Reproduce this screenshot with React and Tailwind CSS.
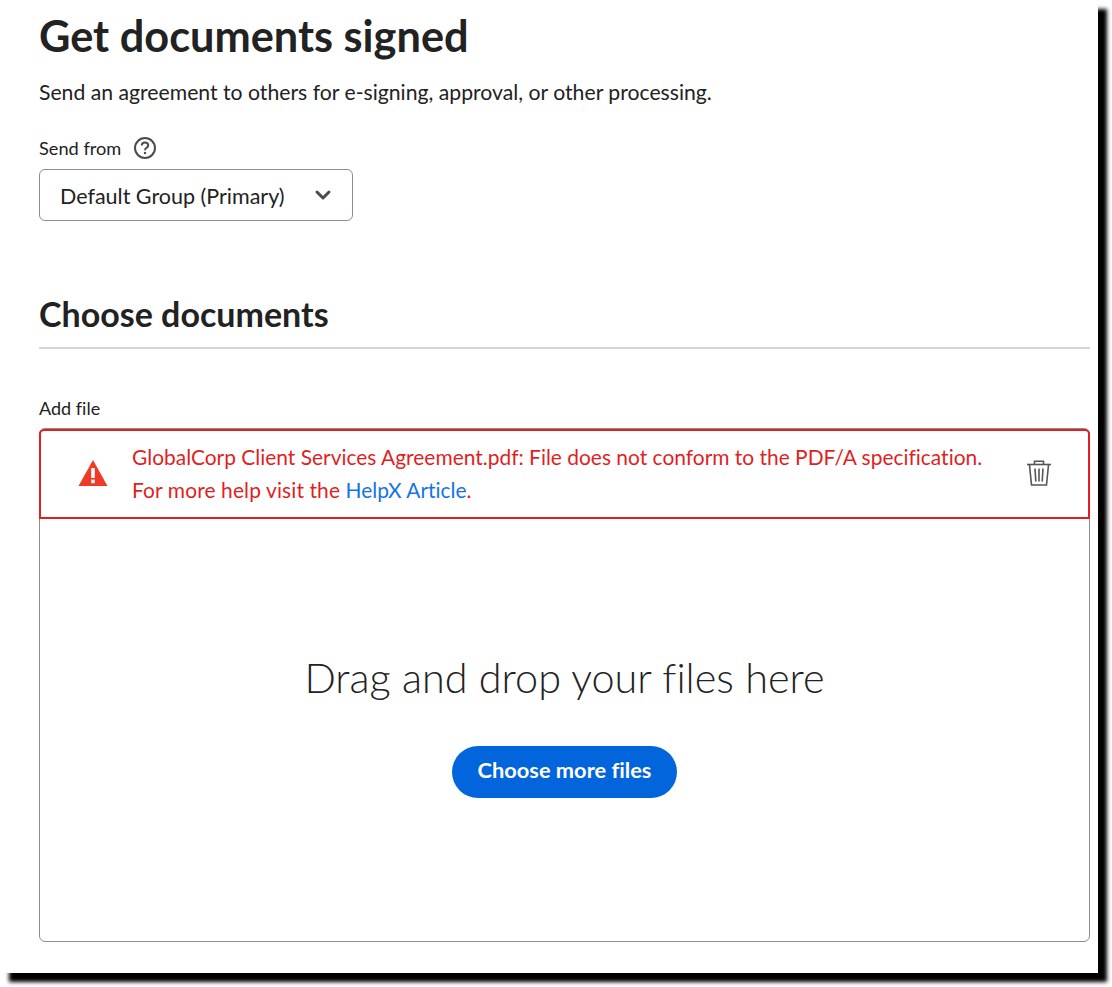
import React from 'react';
import { ChevronDown } from 'lucide-react';

const sans = "font-['Lato','Noto_Sans',sans-serif]";

const HelpIcon = () => (
  <svg width="24" height="24" viewBox="0 0 24 24" fill="none" stroke="#4b4b4b" strokeWidth="2">
    <circle cx="12" cy="12" r="10" />
    <path d="M8.8 9.6c0-1.9 1.4-3 3.2-3s3.2 1.1 3.2 2.8c0 2.4-3.2 2.4-3.2 4.8" />
    <circle cx="12" cy="17" r="1.2" fill="#4b4b4b" stroke="none" />
  </svg>
);

const AlertIcon = () => (
  <svg width="30" height="28" viewBox="0 0 30 28">
    <path d="M15 1 L29.5 27 H0.5 Z" fill="#ef3a26" />
    <rect x="13.2" y="9" width="3.6" height="10" fill="#fff" />
    <rect x="13.2" y="20.6" width="3.6" height="3.6" fill="#fff" />
  </svg>
);

const TrashIcon = () => (
  <svg width="26" height="28" viewBox="0 0 26 28" fill="none" stroke="#555" strokeWidth="1.6">
    <path d="M1 5.5H25" />
    <path d="M8.5 5V2.2H17.5V5" />
    <path d="M3.5 6L5.5 26H20.5L22.5 6" />
    <path d="M9 9.5L9.8 22.5M13 9.5V22.5M17 9.5L16.2 22.5" />
  </svg>
);

export default function App() {
  return (
    <div className={`w-[1112px] h-[987px] bg-white overflow-hidden [font-variant-ligatures:none] ${sans}`}>
      <div className="w-[1098px] h-[973px] bg-white shadow-[9px_9px_4px_#000] pl-[39px] pr-[8px] text-[#222]">
        <h1 className="text-[43.3px] leading-[50px] font-bold pt-[10px] h-[61px] box-content">Get documents signed</h1>
        <p className="text-[21.2px] leading-[28px] mt-[7px]">Send an agreement to others for e-signing, approval, or other processing.</p>

        <div className="flex items-center gap-[12px] mt-[30px] h-[24px]">
          <span className="text-[18.2px] leading-[24px]">Send from</span>
          <HelpIcon />
        </div>

        <div className="flex items-center justify-between w-[314px] h-[52px] mt-[9px] pl-[20px] pr-[17px] border border-[#8e8e8e] rounded-[6px] text-[21.5px]">
          <span className="pt-[2px]">Default Group (Primary)</span>
          <ChevronDown size={24} strokeWidth={3} color="#4b4b4b" />
        </div>

        <h2 className="text-[34px] leading-[40px] font-bold mt-[73px]">Choose documents</h2>
        <div className="h-[2px] bg-[#d5d5d5] mt-[13px]" />

        <div className="text-[18px] leading-[24px] mt-[47px]">Add file</div>

        <div className="flex flex-col h-[514px] mt-[8px] border border-[#8e8e8e] rounded-[6px]">
          <div className="flex items-center h-[90px] -mx-px pb-[2px] border-2 border-[#e01f1f] rounded-t-[5px] text-[20.95px] leading-[33px] text-[#e01f1f]">
            <div className="w-[91px] flex pl-[37px] shrink-0"><AlertIcon /></div>
            <div className="flex-1">
              <div>GlobalCorp Client Services Agreement.pdf: File does not conform to the PDF/A specification.</div>
              <div><span className="tracking-[0.12px]">For more help visit the</span> <span className="text-[#1473e6]">HelpX Article</span>.</div>
            </div>
            <div className="w-[98px] flex justify-center shrink-0"><TrashIcon /></div>
          </div>

          <div className="flex-1 flex flex-col items-center pt-[130px]">
            <div className="text-[41.4px] leading-[56px] font-light">Drag and drop your files here</div>
            <button className="mt-[41px] w-[225px] h-[52px] pb-[4px] rounded-full bg-[#0265dc] text-white text-[21.8px] font-bold">Choose more files</button>
          </div>
        </div>
      </div>
    </div>
  );
}
